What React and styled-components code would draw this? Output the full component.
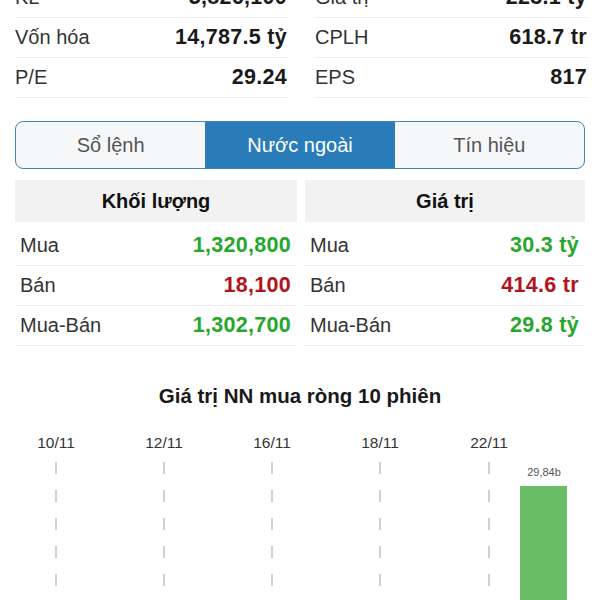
import React from 'react';
import styled, { createGlobalStyle } from 'styled-components';

const GlobalStyle = createGlobalStyle`
  html, body {
    margin: 0;
    padding: 0;
    background: #fff;
  }
  body {
    font-family: "Liberation Sans", Arial, sans-serif;
    color: #222;
    overflow: hidden;
  }
`;

const Page = styled.div`
  width: 600px;
  height: 600px;
  overflow: hidden;
`;

const Content = styled.div`
  margin-top: -22px;
`;

const StatGrid = styled.div`
  display: grid;
  grid-template-columns: 272px 272px;
  column-gap: 28px;
  padding: 0 15px;
`;

const StatCell = styled.div`
  display: flex;
  align-items: center;
  justify-content: space-between;
  height: 40px;
  border-bottom: 1px solid #ececec;
  box-sizing: border-box;
  font-size: 20px;
`;

const Label = styled.span`
  color: #333;
  padding-left: ${({ $inset }) => ($inset ? '5px' : '0')};
`;

const Value = styled.span`
  font-size: 21.5px;
  letter-spacing: 0.3px;
  font-weight: 700;
  color: ${({ $tone }) =>
    $tone === 'up' ? '#26a62c' : $tone === 'down' ? '#b3131d' : '#1a1a1a'};
  padding-right: ${({ $inset }) => ($inset ? '6px' : '0')};
`;

const Tabs = styled.div`
  display: flex;
  margin: 23px 15px 0;
  height: 48px;
  border: 1.5px solid #3f86bf;
  border-radius: 8px;
  overflow: hidden;
  box-sizing: border-box;
  background: #f6f7f8;
`;

const Tab = styled.div`
  flex: 1;
  display: flex;
  align-items: center;
  justify-content: center;
  font-size: 20px;
  color: ${({ $active }) => ($active ? '#fff' : '#555')};
  background: ${({ $active }) => ($active ? '#2a7cb9' : 'transparent')};
`;

const FlowGrid = styled.div`
  display: grid;
  grid-template-columns: 282px 280px;
  column-gap: 8px;
  padding: 0 15px;
`;

const HeadRow = styled(FlowGrid)`
  margin-top: 11px;
  margin-bottom: 4px;
`;

const HeadCell = styled.div`
  height: 42px;
  display: flex;
  align-items: center;
  justify-content: center;
  background: #f2f2f2;
  font-size: 20px;
  font-weight: 700;
  color: #111;
`;

const ChartTitle = styled.h3`
  margin: 37px 0 0;
  text-align: center;
  font-size: 20.5px;
  line-height: 26px;
  font-weight: 700;
  color: #1a1a1a;
`;

const ChartBox = styled.div`
  margin-top: 15px;
  height: 200px;
`;

const stats = [
  ['KL', '5,826,100', 'Giá trị', '223.1 tỷ'],
  ['Vốn hóa', '14,787.5 tỷ', 'CPLH', '618.7 tr'],
  ['P/E', '29.24', 'EPS', '817'],
];

const volume = [
  ['Mua', '1,320,800', 'up'],
  ['Bán', '18,100', 'down'],
  ['Mua-Bán', '1,302,700', 'up'],
];

const amount = [
  ['Mua', '30.3 tỷ', 'up'],
  ['Bán', '414.6 tr', 'down'],
  ['Mua-Bán', '29.8 tỷ', 'up'],
];

const dates = [
  ['10/11', 56],
  ['12/11', 164],
  ['16/11', 272],
  ['18/11', 380],
  ['22/11', 489],
];

function NetChart() {
  const dashY = [38, 66, 94, 122, 150];
  return (
    <svg width="600" height="200" viewBox="0 0 600 200">
      {dates.map(([d, x]) => (
        <g key={d}>
          <text
            x={x}
            y={24}
            textAnchor="middle"
            fontSize="15.5"
            fill="#333"
            fontFamily="Liberation Sans, Arial, sans-serif"
          >
            {d}
          </text>
          {dashY.map(y => (
            <line key={y} x1={x} x2={x} y1={y} y2={y + 12} stroke="#c2c2c2" strokeWidth="1.5" />
          ))}
        </g>
      ))}
      <text
        x={544}
        y={52}
        textAnchor="middle"
        fontSize="11"
        fill="#555"
        fontFamily="Liberation Sans, Arial, sans-serif"
      >
        29,84b
      </text>
      <rect x={520} y={62} width={47} height={140} fill="#6abd67" />
    </svg>
  );
}

export default function App() {
  return (
    <Page>
      <GlobalStyle />
      <Content>
        <StatGrid>
          {stats.map(([l1, v1, l2, v2]) => (
            <React.Fragment key={l1}>
              <StatCell>
                <Label>{l1}</Label>
                <Value>{v1}</Value>
              </StatCell>
              <StatCell>
                <Label>{l2}</Label>
                <Value>{v2}</Value>
              </StatCell>
            </React.Fragment>
          ))}
        </StatGrid>

        <Tabs>
          <Tab>Sổ lệnh</Tab>
          <Tab $active>Nước ngoài</Tab>
          <Tab>Tín hiệu</Tab>
        </Tabs>

        <HeadRow>
          <HeadCell>Khối lượng</HeadCell>
          <HeadCell>Giá trị</HeadCell>
        </HeadRow>

        <FlowGrid>
          {volume.map(([l, v, tone], i) => (
            <React.Fragment key={l}>
              <StatCell>
                <Label $inset>{l}</Label>
                <Value $inset $tone={tone}>{v}</Value>
              </StatCell>
              <StatCell>
                <Label $inset>{amount[i][0]}</Label>
                <Value $inset $tone={amount[i][2]}>{amount[i][1]}</Value>
              </StatCell>
            </React.Fragment>
          ))}
        </FlowGrid>

        <ChartTitle>Giá trị NN mua ròng 10 phiên</ChartTitle>
        <ChartBox>
          <NetChart />
        </ChartBox>
      </Content>
    </Page>
  );
}
